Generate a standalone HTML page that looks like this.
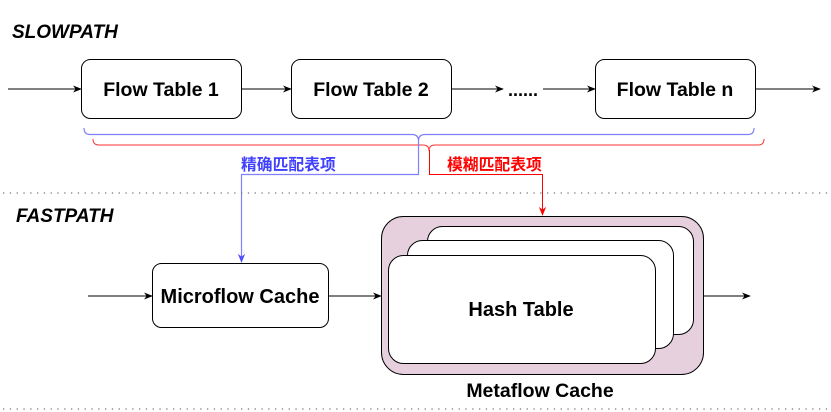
<!DOCTYPE html>
<html><head><meta charset="utf-8"><style>html,body{margin:0;padding:0;background:#fff}svg{display:block}</style></head><body>
<svg width="831" height="412" viewBox="0 0 831 412" xmlns="http://www.w3.org/2000/svg">
<defs>
<marker id="ab" viewBox="0 0 10 10" refX="9" refY="5" markerWidth="9" markerHeight="9" orient="auto" markerUnits="userSpaceOnUse"><path d="M0,1 L10,5 L0,9 L3,5 Z" fill="#000"/></marker>
<marker id="abl" viewBox="0 0 10 10" refX="9" refY="5" markerWidth="9" markerHeight="9" orient="auto" markerUnits="userSpaceOnUse"><path d="M0,1 L10,5 L0,9 L3,5 Z" fill="#4c4cff"/></marker>
<marker id="ar" viewBox="0 0 10 10" refX="9" refY="5" markerWidth="9" markerHeight="9" orient="auto" markerUnits="userSpaceOnUse"><path d="M0,1 L10,5 L0,9 L3,5 Z" fill="#f00"/></marker>
</defs>
<g font-family="Liberation Sans, sans-serif" font-weight="bold">
<text x="12" y="38" font-size="19" font-style="italic">SLOWPATH</text>
<text x="16" y="222" font-size="19" font-style="italic">FASTPATH</text>
</g>
<g stroke="#000" stroke-width="1" fill="none">
<line x1="8" y1="89" x2="81" y2="89" marker-end="url(#ab)"/>
<line x1="241" y1="89" x2="291" y2="89" marker-end="url(#ab)"/>
<line x1="452" y1="89" x2="503" y2="89" marker-end="url(#ab)"/>
<line x1="543" y1="89" x2="595" y2="89" marker-end="url(#ab)"/>
<line x1="755" y1="89" x2="820" y2="89" marker-end="url(#ab)"/>
<line x1="88" y1="296" x2="152" y2="296" marker-end="url(#ab)"/>
<line x1="329" y1="296" x2="381" y2="296" marker-end="url(#ab)"/>
<line x1="704" y1="296" x2="750" y2="296" marker-end="url(#ab)"/>
</g>
<g stroke="#000" stroke-width="1" fill="#fff">
<rect x="81.5" y="59.5" width="160" height="59" rx="9"/>
<rect x="291.5" y="59.5" width="160" height="59" rx="9"/>
<rect x="595.5" y="59.5" width="160" height="59" rx="9"/>
<rect x="152.5" y="263.5" width="176" height="64" rx="9"/>
<rect x="381.5" y="216.5" width="322" height="158" rx="22" fill="#e6d0de"/>
<rect x="427.5" y="226.5" width="266" height="108" rx="15"/>
<rect x="407.5" y="240.5" width="266" height="108" rx="15"/>
<rect x="388.5" y="255.5" width="267" height="108" rx="15"/>
</g>
<g font-family="Liberation Sans, sans-serif" font-weight="bold" font-size="19.5" text-anchor="middle">
<text x="161" y="96">Flow Table 1</text>
<text x="371" y="96">Flow Table 2</text>
<text x="675" y="96">Flow Table n</text>
<text x="240" y="303" font-size="20">Microflow Cache</text>
<text x="521" y="316" font-size="20">Hash Table</text>
<text x="540" y="397" font-size="19.5">Metaflow Cache</text>
<text x="523" y="96" font-size="18">......</text>
</g>
<path d="M84,128 Q84,134.5 90,134.5 L412,134.5 Q418,134.5 418.5,140 Q419,134.5 425,134.5 L748,134.5 Q754,134.5 754,128" stroke="#8080ff" stroke-width="1.2" fill="none"/>
<path d="M93,139 Q93,145 99,145 L423,145 Q429,145 429,151 Q429,145 435,145 L758,145 Q764,145 764,139" stroke="#f33" stroke-width="1" fill="none"/>
<path d="M418.5,138 L418.5,174.5 L241.5,174.5 L241.5,262" stroke="#8080ff" stroke-width="1.2" fill="none" marker-end="url(#abl)"/>
<path d="M429.5,150 L429.5,174.5 L542.5,174.5 L542.5,215" stroke="#f00" stroke-width="1" fill="none" marker-end="url(#ar)"/>
<g font-family="Liberation Sans, Noto Sans CJK SC, sans-serif" font-weight="bold" font-size="15.8">
<text x="241" y="170" fill="#4040ff">精确匹配表项</text>
<text x="447" y="170" fill="#f00">模糊匹配表项</text>
</g>
<line x1="3" y1="193" x2="831" y2="193" stroke="#777" stroke-width="1.3" stroke-dasharray="1.3,5.5"/>
<line x1="3" y1="409" x2="831" y2="409" stroke="#777" stroke-width="1.3" stroke-dasharray="1.3,5.5"/>
</svg>
</body></html>
